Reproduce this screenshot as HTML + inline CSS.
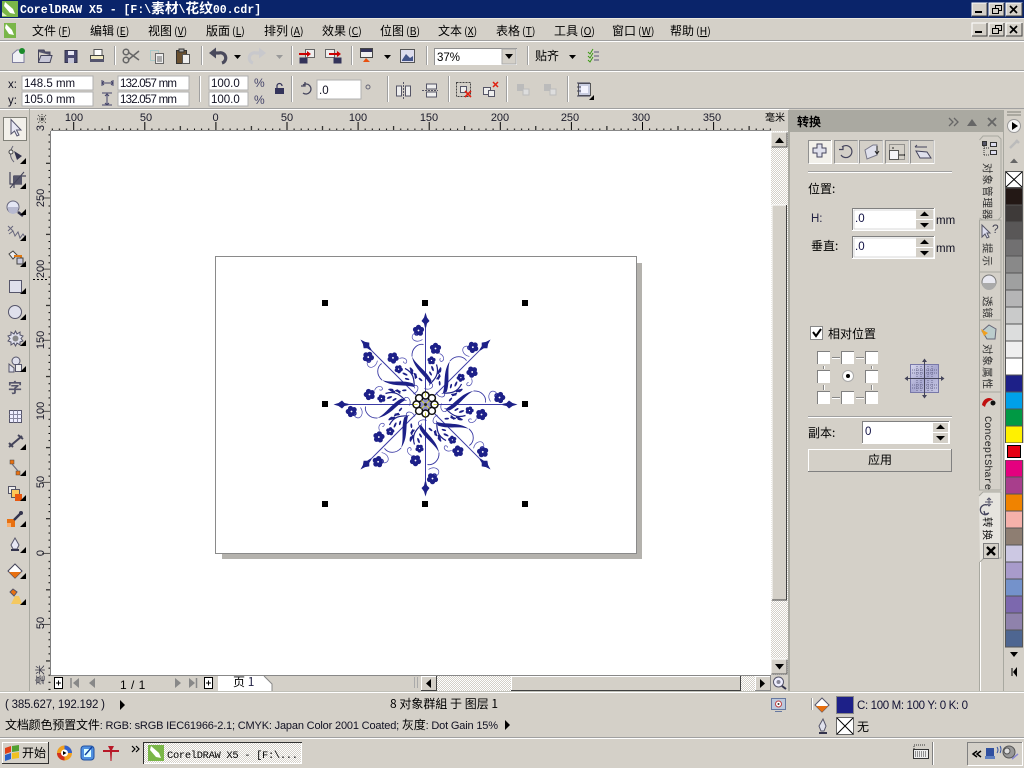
<!DOCTYPE html>
<html><head><meta charset="utf-8"><style>
html,body{margin:0;padding:0;background:#d4d0c8;overflow:hidden}
svg{display:block;position:absolute;left:0;top:0}
text{font-family:"Liberation Sans","Noto Sans CJK SC",sans-serif;font-size:12px;fill:#000}
.cj{font-family:"WenQuanYi Zen Hei","Noto Sans CJK SC",sans-serif}
.m{font-family:"Liberation Mono","WenQuanYi Zen Hei","Noto Sans CJK SC",monospace}
.r{font-size:11px;fill:#1a1a2a}
.n{font-size:11.5px;fill:#112}
</style></head><body>
<svg width="1024" height="768" viewBox="0 0 1024 768" xmlns="http://www.w3.org/2000/svg">
<defs>
<pattern id="dith" width="2" height="2" patternUnits="userSpaceOnUse"><rect width="2" height="2" fill="#d4d0c8"/><rect width="1" height="1" fill="#fff"/><rect x="1" y="1" width="1" height="1" fill="#fff"/></pattern>
<pattern id="hr" width="71.1" height="22" x="215.4" y="109" patternUnits="userSpaceOnUse"><path d="M.5 13V22M7.6 19.500V21M14.700 19.500V21M21.800 19.500V21M28.900 19.500V21M36 17V21M43.100 19.500V21M50.200 19.500V21M57.300 19.500V21M64.400 19.500V21" stroke="#000" stroke-width="1"/></pattern>
<pattern id="vr" width="22" height="71.1" x="30" y="-15" patternUnits="userSpaceOnUse"><path d="M12 71H21M18.500 7.700H20.500M18.500 14.800H20.500M18.500 21.900H20.500M18.500 29H20.500M16 36.100H20.500M18.500 43.200H20.500M18.500 50.300H20.500M18.500 57.400H20.500M18.500 64.500H20.500" stroke="#000" stroke-width="1"/></pattern>
<g id="fl"><circle cx="0" cy="-3.200" r="2.600"/><circle cx="3" cy="-1" r="2.600"/><circle cx="1.900" cy="2.600" r="2.600"/><circle cx="-1.900" cy="2.600" r="2.600"/><circle cx="-3" cy="-1" r="2.600"/><circle r=".9" fill="#fff"/></g>
<g id="arm" fill="#1d2088">
<path d="M0 -12V-80" stroke="#3a3aa4" stroke-width="1" fill="none"/>
<path d="M0 -92L1.500 -87L4 -83.500L1.500 -81L.6 -77H-.6L-1.500 -81L-4 -83.500L-1.500 -87Z"/>
<use href="#fl" x="-7" y="-74"/><use href="#fl" x="10" y="-56"/>
<use href="#fl" transform="translate(6 -44) scale(.72)"/>
<path d="M4.500 -20C-1 -30 -11 -35 -13.500 -48C-9 -39 1 -34 6 -24Z"/>
<path d="M-13.500 -48C-14 -56 -8 -61 -2 -60" stroke="#3a3aa4" stroke-width=".9" fill="none"/>
<path d="M-3 -65C-9 -61 -15 -65 -13 -69C-12 -72 -8 -71 -9 -69" stroke="#4a4ab0" stroke-width=".7" fill="none"/>
<path d="M5 -21C10 -26 14 -31 11 -40" stroke="#1d2088" stroke-width="1.200" fill="none"/>
<path d="M-1 -16C4 -14 8 -17 7 -20C6 -22 4 -21 4 -19" stroke="#3a3aa4" stroke-width=".7" fill="none"/>
<path d="M14 -51C19 -49 19 -44 16 -43C14 -43 14 -46 15 -46" stroke="#4a4ab0" stroke-width=".7" fill="none"/>
<ellipse cx="13.500" cy="-33" rx="1.100" ry="3" transform="rotate(20 13.500 -33)"/><ellipse cx="7" cy="-36" rx="1" ry="2.800" transform="rotate(-20 7 -36)"/><ellipse cx="13" cy="-27" rx="1" ry="2.800" transform="rotate(50 13 -27)"/><ellipse cx="5" cy="-31" rx=".9" ry="2.300" transform="rotate(-30 5 -31)"/>
<ellipse cx="-10" cy="-29" rx="1" ry="3" transform="rotate(-30 -10 -29)"/><ellipse cx="-14" cy="-35" rx="1" ry="2.600" transform="rotate(-40 -14 -35)"/><ellipse cx="-5" cy="-25" rx=".9" ry="2.300" transform="rotate(-50 -5 -25)"/>
</g>
<g id="sb"><rect width="16" height="15" fill="#d4d0c8"/><path d="M0 15V0H16" stroke="#fff" fill="none"/><path d="M.5 15H16V.5" stroke="#555" fill="none"/></g>
<linearGradient id="pv" x1="0" y1="0" x2="1" y2="1"><stop offset="0" stop-color="#d8d8ee"/><stop offset=".5" stop-color="#a8a8d0"/><stop offset="1" stop-color="#c8c8e4"/></linearGradient>
</defs>

<rect width="1024" height="768" fill="#d4d0c8"/>

<!-- title -->
<rect width="1024" height="18" fill="#0a246a"/>
<rect x="0" y="18" width="1024" height="1" fill="#ece9e0"/>
<rect x="2" y="1" width="16" height="16" fill="#7ab648"/><path d="M5 2L13 9L15 14L10 13L4 6Z" fill="#fff"/><path d="M2 12L7 16H2Z" fill="#dff0c0"/>
<text class="m" x="20" y="13" style="font-size:11.500px;font-weight:bold;fill:#fff">CorelDRAW X5 - [F:\<tspan class="cj" style="font-size:13.700px">素材</tspan>\<tspan class="cj" style="font-size:13.700px">花纹</tspan>00.cdr]</text>

<g id="wb">
<rect x="972" y="3" width="15" height="13" fill="#d4d0c8" stroke="#fff"/><path d="M987 3V16H972" stroke="#404040" fill="none"/><rect x="975" y="11" width="7" height="2" fill="#000"/>
<rect x="989" y="3" width="15" height="13" fill="#d4d0c8" stroke="#fff"/><path d="M1004 3V16H989" stroke="#404040" fill="none"/><path d="M995.500 8.500V5.500H1001.500V10.500H999M992.500 8.500H998.500V13.500H992.500Z" stroke="#000" fill="none"/><path d="M995 5.500H1002M992 8.500H999" stroke="#000"/>
<rect x="1006" y="3" width="16" height="13" fill="#d4d0c8" stroke="#fff"/><path d="M1022 3V16H1006" stroke="#404040" fill="none"/><path d="M1010 6L1017 13M1017 6L1010 13" stroke="#000" stroke-width="1.700"/>
</g>
<use href="#wb" y="20"/>

<!-- menu -->
<rect x="4" y="23" width="12" height="15" fill="#7ab648"/><path d="M6 24L12 30L14 35L9 34L5 28Z" fill="#fff"/>
<g class="cj">
<text x="32" y="35" class="cj">文件<tspan style="font-size:10.500px" dx="2">(<tspan text-decoration="underline">F</tspan>)</tspan></text>
<text x="90" y="35" class="cj">编辑<tspan style="font-size:10.500px" dx="2">(<tspan text-decoration="underline">E</tspan>)</tspan></text>
<text x="148" y="35" class="cj">视图<tspan style="font-size:10.500px" dx="2">(<tspan text-decoration="underline">V</tspan>)</tspan></text>
<text x="206" y="35" class="cj">版面<tspan style="font-size:10.500px" dx="2">(<tspan text-decoration="underline">L</tspan>)</tspan></text>
<text x="264" y="35" class="cj">排列<tspan style="font-size:10.500px" dx="2">(<tspan text-decoration="underline">A</tspan>)</tspan></text>
<text x="322" y="35" class="cj">效果<tspan style="font-size:10.500px" dx="2">(<tspan text-decoration="underline">C</tspan>)</tspan></text>
<text x="380" y="35" class="cj">位图<tspan style="font-size:10.500px" dx="2">(<tspan text-decoration="underline">B</tspan>)</tspan></text>
<text x="438" y="35" class="cj">文本<tspan style="font-size:10.500px" dx="2">(<tspan text-decoration="underline">X</tspan>)</tspan></text>
<text x="496" y="35" class="cj">表格<tspan style="font-size:10.500px" dx="2">(<tspan text-decoration="underline">T</tspan>)</tspan></text>
<text x="554" y="35" class="cj">工具<tspan style="font-size:10.500px" dx="2">(<tspan text-decoration="underline">O</tspan>)</tspan></text>
<text x="612" y="35" class="cj">窗口<tspan style="font-size:10.500px" dx="2">(<tspan text-decoration="underline">W</tspan>)</tspan></text>
<text x="670" y="35" class="cj">帮助<tspan style="font-size:10.500px" dx="2">(<tspan text-decoration="underline">H</tspan>)</tspan></text>
</g>
<rect y="40" width="1024" height="1" fill="#a0a0a0"/><rect y="41" width="1024" height="1" fill="#fff"/>

<!-- toolbar -->
<g>
<path d="M12.500 54L17 50H24V62.500H12.500Z" fill="#f0f0f4" stroke="#8080a0"/><circle cx="22" cy="51" r="3" fill="#1a8a2a"/>
<path d="M38.500 52V62.500H50L52 55.500H41L38.500 62" fill="#c8c8d8" stroke="#44445c"/><path d="M38.500 52V50H44L45 52H50V55" fill="#55556e" stroke="#44445c"/>
<path d="M65 50.500H77V62.500H65Z" fill="#4a4a70" stroke="#33334c"/><rect x="68" y="51" width="6" height="4" fill="#e8e8f4"/><rect x="68" y="58" width="6" height="5" fill="#c8c8d8"/>
<rect x="94" y="49.500" width="8" height="6" fill="#fff" stroke="#555"/><path d="M90.500 55.500H103.500V61.500H90.500Z" fill="#f0e8c0" stroke="#444"/><rect x="90" y="59" width="14" height="3" fill="#55556e"/>
<circle cx="126" cy="60" r="2.800" fill="none" stroke="#666" stroke-width="1.500"/><circle cx="126" cy="52" r="2.800" fill="none" stroke="#666" stroke-width="1.500"/><path d="M128 52L139 60M128 60L139 51" stroke="#666" stroke-width="1.500"/>
<rect x="150.500" y="50.500" width="8" height="10" fill="none" stroke="#a8c8c8"/><rect x="155.500" y="53.500" width="8" height="10" fill="#eee" stroke="#666"/><path d="M157 57H162M157 59H162M157 61H162" stroke="#666"/>
<rect x="176.500" y="50.500" width="10" height="13" fill="#6a5030" stroke="#333"/><rect x="179" y="49" width="5" height="3" fill="#aaa" stroke="#333"/><rect x="182.500" y="54.500" width="7" height="9" fill="#eee" stroke="#555"/>
<path d="M214 53H219A5 5 0 0 1 222 63" stroke="#4a4a5c" stroke-width="3.200" fill="none"/><path d="M216 47.500L209 53L216 58.500Z" fill="#4a4a5c"/>
<path d="M234 55H241L237.500 59Z" fill="#000"/>
<path d="M261 53H256A5 5 0 0 0 253 63" stroke="#c8c8cc" stroke-width="3.200" fill="none"/><path d="M259 47.500L266 53L259 58.500Z" fill="#c8c8cc"/>
<path d="M276 55H283L279.500 59Z" fill="#999"/>
<rect x="299.500" y="57.500" width="8" height="6" fill="#33335a"/><rect x="305.500" y="49.500" width="9" height="8" fill="#eee" stroke="#666"/><path d="M299 54H309" stroke="#c00" stroke-width="2"/><path d="M307 51L311 54L307 57Z" fill="#c00"/>
<rect x="325.500" y="49.500" width="9" height="8" fill="#eee" stroke="#666"/><rect x="333.500" y="57.500" width="8" height="6" fill="#33335a"/><path d="M329 54H339" stroke="#c00" stroke-width="2"/><path d="M337 51L341 54L337 57Z" fill="#c00"/>
<rect x="360.500" y="48.500" width="12" height="9" fill="#eee" stroke="#444"/><rect x="361" y="49" width="11" height="3" fill="#33335a"/><path d="M363 62L366 58L370 62Z" fill="#e85010"/>
<path d="M384 55H391L387.500 59Z" fill="#000"/>
<rect x="400.500" y="49.500" width="14" height="13" fill="#dde" stroke="#555"/><path d="M402 60L406 54L410 58L413 56V61H402Z" fill="#44558a"/>
<path d="M114.500 46V65M201.500 46V65M291.500 46V65M351.500 46V65M426.500 46V65M527.500 46V65" stroke="#a0a0a0"/><path d="M115.500 46V65M202.500 46V65M292.500 46V65M352.500 46V65M427.500 46V65M528.500 46V65" stroke="#fff"/>
<rect x="434" y="48" width="83" height="17" fill="#fff"/><path d="M434.500 65V48.500H517" stroke="#909090" fill="none"/>
<rect x="502" y="49" width="14" height="15" fill="#d4d0c8" stroke="#aaa"/><path d="M505 54H513L509 59Z" fill="#000"/>
<text x="437" y="61" style="font-size:11.500px">37%</text>
<text x="535" y="60" class="cj">贴齐</text>
<path d="M569 55H576L572.500 59Z" fill="#000"/>
<path d="M594 52H599M594 56H599M594 60H599" stroke="#5a5a78" fill="none"/><path d="M588 52L590 54L593 49M588 56L590 58L593 53M588 60L590 62L593 57" stroke="#3a9a10" fill="none"/>
</g>
<rect y="70" width="1024" height="1" fill="#a0a0a0"/><rect y="71" width="1024" height="1" fill="#fff"/>

<!-- property bar -->
<g>
<text x="8" y="88" class="n">x:</text><text x="8" y="104" class="n">y:</text>
<rect x="22" y="76" width="71" height="14" fill="#fff" stroke="#b0b0b0"/><rect x="22" y="92" width="71" height="14" fill="#fff" stroke="#b0b0b0"/>
<text x="24" y="87" class="n">148.5 mm</text><text x="24" y="103" class="n">105.0 mm</text>
<path d="M102 83H113M102 80V86M113 80V86M104 81L102 83L104 85M111 81L113 83L111 85" stroke="#44446a" fill="none"/>
<path d="M107 94V105M102 93H112M102 105H112M105 96L107 94L109 96M105 103L107 105L109 103" stroke="#44446a" fill="none"/>
<rect x="118" y="76" width="71" height="14" fill="#fff" stroke="#b0b0b0"/><rect x="118" y="92" width="71" height="14" fill="#fff" stroke="#b0b0b0"/>
<text x="120" y="87" class="n" textLength="57">132.057 mm</text><text x="120" y="103" class="n" textLength="57">132.057 mm</text>
<path d="M199.500 76V102" stroke="#a0a0a0"/><path d="M200.500 76V102" stroke="#fff"/>
<rect x="209" y="76" width="39" height="14" fill="#fff" stroke="#b0b0b0"/><rect x="209" y="92" width="39" height="14" fill="#fff" stroke="#b0b0b0"/>
<text x="211" y="87" class="n">100.0</text><text x="211" y="103" class="n">100.0</text>
<text x="254" y="87" style="font-size:12px;fill:#44446a">%</text><text x="254" y="104" style="font-size:12px;fill:#44446a">%</text>
<rect x="275" y="88" width="9" height="6" fill="#33335a"/><path d="M277 88V86A2.500 2.500 0 0 1 282 86" stroke="#33335a" fill="none" stroke-width="1.200"/>
<path d="M291.500 76V102" stroke="#a0a0a0"/><path d="M292.500 76V102" stroke="#fff"/>
<path d="M303 85A5 5 0 1 1 303 93M301 86H305V82" stroke="#44445c" fill="none" stroke-width="1.300"/>
<rect x="317" y="80" width="44" height="19" fill="#fff" stroke="#b0b0b0"/><text x="319" y="94" class="n">.0</text>
<circle cx="368" cy="87" r="2" fill="none" stroke="#667"/>
<path d="M387.500 76V102M448.500 76V102M506.500 76V102M567.500 76V102" stroke="#a0a0a0"/><path d="M388.500 76V102M449.500 76V102M507.500 76V102M568.500 76V102" stroke="#fff"/>
<path d="M396.500 86H401.500V96H396.500ZM405.500 86H410.500V96H405.500Z" fill="#eee" stroke="#556"/><path d="M403.500 82V99" stroke="#556" stroke-dasharray="2 1"/>
<path d="M426.500 84H436.500V89H426.500ZM426.500 92H436.500V97H426.500Z" fill="#eee" stroke="#556"/><path d="M422 90.500H438" stroke="#556" stroke-dasharray="2 1"/>
<rect x="456.500" y="82.500" width="14" height="14" fill="none" stroke="#444" stroke-dasharray="2 1"/><rect x="460.500" y="86.500" width="6" height="6" fill="#eee" stroke="#556"/><path d="M465 91L471 97M471 91L465 97" stroke="#e02010" stroke-width="1.600"/>
<rect x="483.500" y="87.500" width="7" height="7" fill="#eee" stroke="#556"/><rect x="488.500" y="90.500" width="6" height="6" fill="#eee" stroke="#556"/><path d="M493 82L498 87M498 82L493 87" stroke="#e02010" stroke-width="1.500"/>
<rect x="517" y="84" width="7" height="7" fill="#bbb"/><rect x="523" y="89" width="6" height="6" fill="#ddd" stroke="#bbb"/><rect x="544" y="84" width="7" height="7" fill="#bbb"/><rect x="550" y="89" width="6" height="6" fill="#ddd" stroke="#bbb"/>
<rect x="578.500" y="83.500" width="12" height="12" fill="#c8cce0" stroke="#555"/><rect x="581" y="86" width="7" height="7" fill="#f4f4ff"/><path d="M577 83H590M577 87H581M577 91H581M577 96H590" stroke="#44445c"/><path d="M589 100L594 95V100Z" fill="#000"/>
</g>
<rect y="108" width="1024" height="1" fill="#a0a0a0"/><rect y="109" width="789" height="1" fill="#fff"/>

<!-- toolbox -->
<rect x="29" y="109" width="1" height="583" fill="#a8a8a0"/>
<rect x="3.500" y="117.500" width="23" height="23" fill="#f2f0ea" stroke="#808078"/>
<g>
<path d="M11 119.500V134L14.500 131L17 136L19 135L16.500 130H21Z" fill="#e8e8f4" stroke="#55556e"/>
<path d="M13 146C9 152 10 158 14 162" stroke="#667" fill="none"/><circle cx="11" cy="152" r="2" fill="#eee" stroke="#444"/><path d="M14 151L22 156L17 160Z" fill="#33334c"/>
<path d="M10 172V184H22M14 188V176H26" stroke="#44445a" fill="none" stroke-width="1.200"/><rect x="13" y="176" width="9" height="8" fill="#55556a"/><path d="M10 188L24 172" stroke="#44445a"/>
<circle cx="13" cy="207" r="6" fill="#e4e6f4" stroke="#66667c"/><path d="M8 207H18V209A5 5 0 0 1 8 209Z" fill="#b8bad0"/><path d="M18 212L23 216" stroke="#33334c" stroke-width="2.500"/>
<path d="M8 226L13 231M13 226L8 231M9 234L13 231L15 236L18 232L20 238L23 234L25 237" stroke="#66667c" fill="none"/>
<path d="M9 254L13 251L17 255L13 259Z" fill="#eee" stroke="#444"/><path d="M14 256H21V262" stroke="#e07810" stroke-width="2" fill="none"/><rect x="17" y="258" width="6" height="6" fill="#ccd" stroke="#444"/>
<rect x="9.500" y="280.500" width="12" height="12" fill="#dfe0ec" stroke="#55556a"/>
<circle cx="15" cy="312" r="6.500" fill="#dfe0ec" stroke="#55556a"/>
<path d="M15.500 331L17 334L20 332L20 335L23 336L21 338.500L23 341L20 342L20 345L17 343L15.500 346L14 343L11 345L11 342L8 341L10 338.500L8 336L11 335L11 332L14 334Z" fill="#dfe0ec" stroke="#55556a"/><circle cx="15.500" cy="338.500" r="3" fill="#888"/>
<circle cx="16" cy="361" r="4" fill="#dfe0ec" stroke="#55556a"/><path d="M9 364L14 368V372H9Z" fill="#dfe0ec" stroke="#55556a"/><rect x="15.500" y="364.500" width="6" height="7" fill="#eee" stroke="#55556a"/>
<text x="8" y="393" class="cj" style="font-size:14px;fill:#55556a;font-weight:bold">字</text>
<rect x="9.500" y="410.500" width="12" height="12" fill="#eef" stroke="#55556a"/><path d="M9.500 414.500H21.500M9.500 418.500H21.500M13.500 410.500V422.500M17.500 410.500V422.500" stroke="#8888a0"/>
<path d="M9 447L22 436" stroke="#44445a" stroke-width="2"/><path d="M9 443L13 447M18 435L23 439" stroke="#44445a" stroke-width="2"/>
<rect x="10" y="460" width="4" height="4" fill="#e87010" stroke="#444" stroke-width=".5"/><rect x="16" y="471" width="4" height="4" fill="#e87010" stroke="#444" stroke-width=".5"/><path d="M12 464L18 471" stroke="#667"/>
<rect x="8.500" y="486.500" width="7" height="7" fill="#eee" stroke="#556"/><rect x="11.500" y="489.500" width="8" height="8" fill="#fcc858" stroke="#556"/><rect x="15" y="494" width="7" height="7" fill="#e85810"/>
<rect x="7" y="519" width="8" height="8" fill="#e87010"/><rect x="7" y="523" width="4" height="4" fill="#f8b070"/><path d="M14 520L22 512" stroke="#33334c" stroke-width="2.500"/><circle cx="21" cy="513" r="2" fill="#33334c"/>
<path d="M15 538L19 545L17 549H13L11 545Z" fill="#e8e8f4" stroke="#55556a"/><rect x="11" y="549" width="8" height="2" fill="#33334c"/>
<path d="M8 571L15 564L22 571L15 578Z" fill="#fff" stroke="#44445a"/><path d="M9 572H21L15 578Z" fill="#e87010"/>
<path d="M10 592L13 589L17 592L14 596Z" fill="#e87010" stroke="#55556a"/><path d="M15 596H19L22 604H11Z" fill="#f4c860"/>
<path d="M20 164H26V158Z M20 189H26V183Z M20 215H26V209Z M20 241H26V235Z M20 267H26V261Z M20 294H26V288Z M20 320H26V314Z M20 346H26V340Z M20 372H26V366Z M20 450H26V444Z M20 476H26V470Z M20 501H26V495Z M20 527H26V521Z M20 553H26V547Z M20 579H26V573Z M20 605H26V599Z" fill="#000"/>
</g>

<!-- rulers -->
<rect x="30" y="110" width="759" height="21" fill="#d4d0c8"/>
<rect x="51" y="109" width="720" height="22" fill="url(#hr)"/>
<rect x="30" y="131" width="21" height="560" fill="url(#vr)"/>
<path d="M38 115L46 123M46 115L38 123M42 114V124M37 119H47" stroke="#333" stroke-dasharray="1 1"/>
<g text-anchor="middle">
<text class="r" x="74" y="121">100</text><text class="r" x="146" y="121">50</text><text class="r" x="215.500" y="121">0</text><text class="r" x="287" y="121">50</text><text class="r" x="358" y="121">100</text><text class="r" x="429" y="121">150</text><text class="r" x="500" y="121">200</text><text class="r" x="570" y="121">250</text><text class="r" x="641" y="121">300</text><text class="r" x="712" y="121">350</text>
<text class="cj" x="775" y="121" style="font-size:10px">毫米</text>
<text class="r" transform="translate(44 128) rotate(-90)">3</text>
<text class="r" transform="translate(44 198) rotate(-90)">250</text>
<text class="r" transform="translate(44 269) rotate(-90)">200</text>
<text class="r" transform="translate(44 340) rotate(-90)">150</text>
<text class="r" transform="translate(44 411) rotate(-90)">100</text>
<text class="r" transform="translate(44 482) rotate(-90)">50</text>
<text class="r" transform="translate(44 553) rotate(-90)">0</text>
<text class="r" transform="translate(44 623) rotate(-90)">50</text>
<text class="cj" transform="translate(44 675) rotate(-90)" style="font-size:10px;fill:#334">毫米</text>
</g>
<path d="M33 279.500H48" stroke="#000" stroke-dasharray="2 2"/>
<path d="M50.500 131V676" stroke="#808080"/>

<!-- canvas -->
<rect x="51" y="131" width="720" height="544" fill="#fff"/>
<rect x="51" y="130" width="720" height="1" fill="#888"/>
<rect x="222" y="263" width="420" height="296" fill="#b4b2ad"/>
<rect x="215.500" y="256.500" width="421" height="297" fill="#fff" stroke="#8a8a8a"/>
<g transform="translate(425.500 404.500)">
<use href="#arm"/><use href="#arm" transform="rotate(45)"/><use href="#arm" transform="rotate(90)"/><use href="#arm" transform="rotate(135)"/><use href="#arm" transform="rotate(180)"/><use href="#arm" transform="rotate(225)"/><use href="#arm" transform="rotate(270)"/><use href="#arm" transform="rotate(315)"/>
<circle r="12.500" fill="#fff"/>
<circle r="5.500" fill="#9090cc"/>
<g fill="none" stroke="#111" stroke-width="1.500"><circle cx="0" cy="-9" r="3.500"/><circle cx="6.400" cy="-6.400" r="3.500"/><circle cx="9" cy="0" r="3.500"/><circle cx="6.400" cy="6.400" r="3.500"/><circle cx="0" cy="9" r="3.500"/><circle cx="-6.400" cy="6.400" r="3.500"/><circle cx="-9" cy="0" r="3.500"/><circle cx="-6.400" cy="-6.400" r="3.500"/></g>
<path d="M-4 -4L4 4M4 -4L-4 4M-12 0H-8M8 0H12M0 -12V-8M0 8V12" stroke="#d8d840"/><circle r="1.500" fill="#222"/>
</g>
<path d="M322 300h6v6h-6zM422 300h6v6h-6zM522 300h6v6h-6zM322 401h6v6h-6zM522 401h6v6h-6zM322 501h6v6h-6zM422 501h6v6h-6zM522 501h6v6h-6z" fill="#000"/>

<!-- v scrollbar -->
<rect x="771" y="131" width="17" height="545" fill="url(#dith)"/>
<use href="#sb" x="771" y="132"/><path d="M775 143H784L779.500 137.500Z" fill="#000"/>
<rect x="772" y="205" width="15" height="395" fill="#d4d0c8"/><path d="M772 600V205H787" stroke="#fff" fill="none"/><path d="M772 600H786.500V205" stroke="#404040" fill="none"/>
<use href="#sb" x="771" y="659"/><path d="M775 664H784L779.500 669.500Z" fill="#000"/>
<rect x="788" y="110" width="2" height="582" fill="#a8a8a0"/>

<!-- h nav -->
<rect x="51" y="675" width="737" height="1" fill="#888"/>
<rect x="51" y="676" width="737" height="15" fill="#d4d0c8"/>
<g stroke="#000" fill="none"><rect x="54.500" y="677.500" width="8" height="11" fill="#fff"/><path d="M56 683H61M58.500 680.500V685.500"/><rect x="204.500" y="677.500" width="8" height="11" fill="#fff"/><path d="M206 683H211M208.500 680.500V685.500"/></g>
<path d="M71 678V688" stroke="#888" stroke-width="1.500"/><path d="M79 678L73 683L79 688Z" fill="#888"/><path d="M95 678L89 683L95 688Z" fill="#888"/><path d="M175 678L181 683L175 688Z" fill="#888"/><path d="M189 678L195 683L189 688Z" fill="#888"/><path d="M196.500 678V688" stroke="#888" stroke-width="1.500"/>
<text x="120" y="689" style="font-size:12px;letter-spacing:.5px">1 / 1</text>
<path d="M218 676H264L272 684V691H218Z" fill="#fff"/><path d="M264 676L272 684V691" stroke="#888" fill="none"/>
<text x="233" y="686" class="cj">页 <tspan style="fill:#224">1</tspan></text>
<path d="M414.500 677V688M417.500 677V688" stroke="#aaa"/>
<rect x="437" y="676" width="334" height="15" fill="url(#dith)"/>
<rect x="421" y="676" width="16" height="15" fill="#d4d0c8"/><path d="M421.500 691V676.500H437" stroke="#fff" fill="none"/><path d="M421 690.500H436.500V676" stroke="#404040" fill="none"/><path d="M431 679V688L426 683.500Z" fill="#000"/>
<rect x="511" y="676" width="230" height="15" fill="#d4d0c8"/><path d="M511.500 691V676.500H741" stroke="#fff" fill="none"/><path d="M511 690.500H740.500V676" stroke="#404040" fill="none"/>
<rect x="755" y="676" width="16" height="15" fill="#d4d0c8"/><path d="M755.500 691V676.500H771" stroke="#fff" fill="none"/><path d="M755 690.500H770.500V676" stroke="#888" fill="none"/><path d="M760 679V688L765 683.500Z" fill="#000"/>
<rect x="771" y="675" width="17" height="16" fill="#d4d0c8"/><circle cx="778.500" cy="682" r="5" fill="#eef" stroke="#55556a"/><circle cx="778.500" cy="682" r="2" fill="#889"/><path d="M782 686L786 689" stroke="#33334c" stroke-width="2"/>

<!-- docker -->
<rect x="790" y="110" width="213" height="22" fill="#aaa9a1"/>
<text x="797" y="126" class="cj" style="font-size:12px;font-weight:bold">转换</text>
<path d="M949 118L953 122L949 126M954 118L958 122L954 126" stroke="#666" fill="none" stroke-width="1.300"/>
<path d="M967 126H977L972 119Z" fill="#666"/>
<path d="M988 118L996 126M996 118L988 126" stroke="#666" stroke-width="1.800"/>
<rect x="790" y="132" width="189" height="558" fill="#d4d0c8"/>
<rect x="808.500" y="140.500" width="23" height="23" fill="#f2f0ea" stroke="#fff"/><path d="M808.500 163.500V140.500H831" stroke="#909090" fill="none"/>
<g fill="#d4d0c8" stroke="#909090"><rect x="834.500" y="140.500" width="23" height="23"/><rect x="859.500" y="140.500" width="23" height="23"/><rect x="885.500" y="140.500" width="23" height="23"/><rect x="910.500" y="140.500" width="23" height="23"/></g>
<path d="M834.500 163.500H858V140.500M859.500 163.500H883V140.500M885.500 163.500H909V140.500M910.500 163.500H934V140.500" stroke="#fff" fill="none"/>
<path d="M817 144H822V148H826V153H822V157H817V153H813V148H817Z" fill="#dfe0ec" stroke="#44445c"/>
<path d="M842 147A6 6 0 1 1 841 155M839 149.500H843V146" stroke="#44445c" fill="none" stroke-width="1.200"/>
<path d="M865 150L873 145H877V155L867 159Z" fill="#dfe0ec" stroke="#778"/><path d="M877 146V153M875 151L877 154L879 151" stroke="#222" fill="none"/>
<rect x="889.500" y="150.500" width="9" height="9" fill="#f4f4f8" stroke="#555"/><rect x="889.500" y="144.500" width="15" height="15" fill="none" stroke="#555" stroke-dasharray="1 1"/><path d="M893 147V149M899 155H905" stroke="#222"/>
<path d="M916 151L927 152L931 158H920Z" fill="#dfe0ec" stroke="#44445c"/><path d="M915 147H927M915 147L917 145" stroke="#44445c" fill="none"/>
<rect x="808" y="171" width="144" height="1" fill="#a0a0a0"/><rect x="808" y="172" width="144" height="1" fill="#fff"/>
<text x="808" y="193" class="cj">位置:</text>
<text x="811" y="222" class="n" style="fill:#224">H:</text>
<text x="811" y="250" class="cj">垂直:</text>
<g id="inp1">
<rect x="852.500" y="208.500" width="82" height="22" fill="#fff" stroke="#fff"/><path d="M852.500 230V208.500H934" stroke="#808080" fill="none"/><path d="M854 210H933V229H854Z" fill="#fff" stroke="#b0b0b0" stroke-width=".5"/>
<rect x="916" y="209.500" width="17" height="20" fill="#d4d0c8"/><path d="M916 219.500H933" stroke="#fff"/>
<path d="M920 216H929L924.500 211.500Z M920 223H929L924.500 227.500Z" fill="#000"/>
<text x="855" y="222" class="n" style="fill:#114">.0</text>
</g>
<use href="#inp1" y="28"/>
<text x="936" y="224" class="n">mm</text><text x="936" y="252" class="n">mm</text>
<rect x="810.500" y="326.500" width="12" height="13" fill="#fff" stroke="#888"/><path d="M813 332L816 336L821 329" stroke="#000" stroke-width="2" fill="none"/>
<text x="828" y="338" class="cj">相对位置</text>
<g fill="#fff"><rect x="817" y="351" width="13" height="13"/><rect x="841" y="351" width="13" height="13"/><rect x="865" y="351" width="13" height="13"/><rect x="817" y="370" width="13" height="13"/><rect x="865" y="370" width="13" height="13"/><rect x="817" y="391" width="13" height="13"/><rect x="841" y="391" width="13" height="13"/><rect x="865" y="391" width="13" height="13"/></g>
<path d="M817.500 364V351.500H830M841.500 364V351.500H854M865.500 364V351.500H878M817.500 383V370.500H830M865.500 383V370.500H878M817.500 404V391.500H830M841.500 404V391.500H854M865.500 404V391.500H878" stroke="#808080" fill="none"/>
<path d="M832 357.500H840M856 357.500H864M832 397.500H840M856 397.500H864M823.500 366V369M871.500 366V369M823.500 385V390M871.500 385V390" stroke="#888"/><path d="M832 358.500H840M856 358.500H864M832 398.500H840M856 398.500H864M824.500 366V369M872.500 366V369M824.500 385V390M872.500 385V390" stroke="#fff"/>
<circle cx="848" cy="376" r="5.500" fill="#fff" stroke="#aaa"/><circle cx="848" cy="376" r="2" fill="#000"/>
<rect x="910.500" y="364.500" width="28" height="28" fill="url(#pv)" stroke="#7878a8"/><path d="M912 370H937M912 373H937M912 385H937M912 388H937M917 366V391M921 366V391M928 366V391M932 366V391" stroke="#55557a" stroke-dasharray="1 1" stroke-width=".8"/>
<path d="M924.500 360V397M906 378.500H943" stroke="#44445a"/><path d="M922 362H927L924.500 358.500ZM922 395H927L924.500 398.500ZM908 376V381L904.500 378.500ZM941 376V381L944.500 378.500Z" fill="#44445a"/>
<rect x="808" y="416" width="144" height="1" fill="#a0a0a0"/><rect x="808" y="417" width="144" height="1" fill="#fff"/>
<text x="808" y="437" class="cj">副本:</text>
<rect x="862.500" y="421.500" width="87" height="22" fill="#fff" stroke="#fff"/><path d="M862.500 443V421.500H949" stroke="#808080" fill="none"/>
<rect x="933" y="423" width="15" height="20" fill="#d4d0c8"/><path d="M933 432.500H948" stroke="#fff"/><path d="M936 429H945L940.500 424.500ZM936 436H945L940.500 440.500Z" fill="#000"/>
<text x="865" y="435" class="n" style="fill:#114">0</text>
<rect x="808" y="449" width="144" height="23" fill="#d4d0c8"/><path d="M808.500 472V449.500H952" stroke="#fff" fill="none"/><path d="M808 471.500H951.500V449" stroke="#808080" fill="none"/>
<text x="868" y="464" class="cj">应用</text>

<!-- tabs -->
<rect x="1003" y="110" width="1" height="582" fill="#a8a8a0"/>
<path d="M979.500 140L983 136H998L1001 139V217L998 220H983L979.500 218" fill="#d4d0c8" stroke="#a8a8a0"/>
<path d="M979.500 220H1001V272H979.500ZM979.500 272H1001V320H979.500ZM979.500 320H1001V392H979.500ZM979.500 392H1001V490H979.500Z" fill="#d4d0c8" stroke="#a8a8a0"/>
<path d="M979 496L983 492H1001V558H984L980 562" fill="#e6e4de" stroke="#a8a8a0"/>
<path d="M979.500 562V692" stroke="#a8a8a0"/>
<path d="M980.500 562V692" stroke="#fff"/>
<rect x="982.500" y="141.500" width="4" height="4" fill="#556" stroke="#333"/><rect x="990.500" y="142.500" width="6" height="4" fill="#dde" stroke="#333"/><rect x="990.500" y="150.500" width="6" height="4" fill="#dde" stroke="#333"/><path d="M984 146V156M984 148H990M984 155H990" stroke="#333" stroke-dasharray="1 1"/>
<path d="M982 225V237L985 234L987 238L989 237L987 233H990Z" fill="#dde" stroke="#556"/><text x="992" y="233" style="font-size:12px;fill:#445">?</text>
<circle cx="989" cy="282" r="7" fill="#e8e8f0" stroke="#777"/><path d="M982 283A7 7 0 0 0 996 283Z" fill="#aaa"/>
<path d="M982 331L989 325L996 329L995 339L987 339Z" fill="#bcc" stroke="#667"/><path d="M981 329L988 333L984 336Z" fill="#f0a020"/>
<path d="M982 405C983 398 990 396 993 400C990 400 986 402 985 407Z" fill="#c01010"/><circle cx="993" cy="403" r="2.500" fill="#111"/>
<path d="M989 498V506M985 502H993M987 500L989 498L991 500M987 504L989 506L991 504" stroke="#55556a" fill="none"/><path d="M987 505A5 5 0 1 0 988 514M984 511L985 514.500L989 513" stroke="#44445c" fill="none" stroke-width="1.300"/>
<text class="cj" transform="translate(984 163) rotate(90)" style="font-size:10.500px;letter-spacing:1px;fill:#333">对象管理器</text>
<text class="cj" transform="translate(984 243) rotate(90)" style="font-size:10.500px;letter-spacing:2px;fill:#333">提示</text>
<text class="cj" transform="translate(984 296) rotate(90)" style="font-size:10.500px;letter-spacing:1px;fill:#333">透镜</text>
<text class="cj" transform="translate(984 344) rotate(90)" style="font-size:10.500px;letter-spacing:1px;fill:#333">对象属性</text>
<text class="m" transform="translate(985 416) rotate(90)" textLength="74" style="font-size:10.500px;fill:#222">ConceptShare</text>
<text class="cj" transform="translate(984 517) rotate(90)" style="font-size:10.500px;letter-spacing:2px;fill:#111">转换</text>
<rect x="983.500" y="543.500" width="15" height="15" fill="#d4d0c8" stroke="#808080"/><path d="M987 547L995 555M995 547L987 555" stroke="#000" stroke-width="2.400"/>

<!-- palette -->
<rect x="1005" y="110" width="19" height="582" fill="#d4d0c8"/>
<path d="M1007 112H1021M1007 115H1021" stroke="#808078"/>
<circle cx="1014" cy="126" r="6.500" fill="#f4f4f4" stroke="#999"/><path d="M1012 122V130L1018 126Z" fill="#000"/>
<path d="M1010 148L1017 141M1016 140L1019 143" stroke="#bbb" stroke-width="2.500"/>
<path d="M1010 163H1018L1014 158.500Z" fill="#666"/>
<g stroke="#555" stroke-width="1">
<rect x="1005.500" y="171.500" width="17" height="16" fill="#fff"/>
<rect x="1005.500" y="188" width="17" height="17" fill="#231815"/><rect x="1005.500" y="205" width="17" height="17" fill="#3e3a39"/><rect x="1005.500" y="222" width="17" height="17" fill="#595757"/><rect x="1005.500" y="239" width="17" height="17" fill="#717071"/><rect x="1005.500" y="256" width="17" height="17" fill="#898989"/><rect x="1005.500" y="273" width="17" height="17" fill="#9fa0a0"/><rect x="1005.500" y="290" width="17" height="17" fill="#b5b5b6"/><rect x="1005.500" y="307" width="17" height="17" fill="#c9caca"/><rect x="1005.500" y="324" width="17" height="17" fill="#dcdddd"/><rect x="1005.500" y="341" width="17" height="17" fill="#efefef"/><rect x="1005.500" y="358" width="17" height="17" fill="#fff"/><rect x="1005.500" y="375" width="17" height="17" fill="#1d2088"/><rect x="1005.500" y="392" width="17" height="17" fill="#00a0e9"/><rect x="1005.500" y="409" width="17" height="17" fill="#009944"/><rect x="1005.500" y="426" width="17" height="17" fill="#fff100"/>
<rect x="1005.500" y="460" width="17" height="17" fill="#e4007f"/><rect x="1005.500" y="477" width="17" height="17" fill="#a83e8c"/><rect x="1005.500" y="494" width="17" height="17" fill="#f08300"/><rect x="1005.500" y="511" width="17" height="17" fill="#f5b1aa"/><rect x="1005.500" y="528" width="17" height="17" fill="#8e7e72"/><rect x="1005.500" y="545" width="17" height="17" fill="#ccc8e3"/><rect x="1005.500" y="562" width="17" height="17" fill="#a89bcb"/><rect x="1005.500" y="579" width="17" height="17" fill="#7492cb"/><rect x="1005.500" y="596" width="17" height="17" fill="#7c68ae"/><rect x="1005.500" y="613" width="17" height="17" fill="#8f82ac"/><rect x="1005.500" y="630" width="17" height="17" fill="#4e6691"/>
</g>
<path d="M1006 172L1022 187M1022 172L1006 187" stroke="#000"/>
<rect x="1005" y="443" width="19" height="17" fill="#fff"/><rect x="1007.500" y="445.500" width="13" height="12" fill="#e60012" stroke="#000"/>
<path d="M1010 652H1018L1014 657Z" fill="#000"/>
<path d="M1012 668V676" stroke="#000"/><path d="M1017 667V677L1013 672Z" fill="#000"/>

<!-- status -->
<rect y="692" width="1024" height="1" fill="#fff"/><rect y="691" width="1024" height="1" fill="#c0c0b8"/>
<text x="5" y="708" class="n" textLength="100" style="font-size:11.500px">( 385.627, 192.192 )</text>
<path d="M120 700V710L125 705Z" fill="#000"/>
<text x="390" y="708" class="cj" style="font-size:12px">8 对象群組 于 图层 1</text>
<text x="5" y="729" textLength="493" style="font-size:11px;fill:#112"><tspan class="cj" style="font-size:12px;fill:#000">文档颜色预置文件</tspan>: RGB: sRGB IEC61966-2.1; CMYK: Japan Color 2001 Coated; <tspan class="cj" style="font-size:12px;fill:#000">灰度</tspan>: Dot Gain 15%</text>
<path d="M505 720V730L510 725Z" fill="#000"/>
<rect x="771.500" y="698.500" width="14" height="11" fill="#bcc8dc" stroke="#6678a0"/><circle cx="778.500" cy="704" r="3" fill="#fff" stroke="#c04040"/><circle cx="778.500" cy="704" r="1" fill="#333"/><path d="M775 711.500H782" stroke="#6678a0"/>
<path d="M811.500 698V710" stroke="#999"/><path d="M812.500 698V710" stroke="#fff"/>
<path d="M815 705L822 698L829 705L822 712Z" fill="#fff" stroke="#55556a"/><path d="M816 706H828L822 712Z" fill="#e87010"/>
<rect x="836.500" y="696.500" width="17" height="17" fill="#1d2088" stroke="#888"/>
<text x="857" y="709" class="n" textLength="111" style="font-size:11.500px;fill:#113">C: 100 M: 100 Y: 0 K: 0</text>
<path d="M823 719L826 726L824 731H821L819 726Z" fill="#dfe0ec" stroke="#55556a"/><rect x="819" y="732" width="8" height="2" fill="#33334c"/>
<rect x="836.500" y="717.500" width="17" height="17" fill="#fff" stroke="#666"/><path d="M837 718L853 734M853 718L837 734" stroke="#000"/>
<text x="857" y="731" class="cj">无</text>

<!-- taskbar -->
<rect y="737" width="1024" height="1" fill="#a0a0a0"/><rect y="738" width="1024" height="1" fill="#fff"/>
<rect x="2" y="742" width="47" height="22" fill="#d4d0c8"/><path d="M2.500 764V742.500H49" stroke="#fff" fill="none"/><path d="M2 763.500H48.500V742" stroke="#303030" fill="none"/>
<path d="M5 748L11 746V752L5 754Z" fill="#e04018"/><path d="M12 746L19 745V751L12 752Z" fill="#50a030"/><path d="M5 755L11 753V759L5 761Z" fill="#2860c8"/><path d="M12 753L19 752V758L12 759Z" fill="#f0c020"/>
<text x="22" y="757" class="cj" style="font-size:12px">开始</text>
<circle cx="64.500" cy="753" r="7.500" fill="#f0a020"/><path d="M64.500 745.500A7.500 7.500 0 0 1 72 753H64.500Z" fill="#3060d0"/><path d="M57 753A7.500 7.500 0 0 0 64.500 760.500V753Z" fill="#d03020"/><circle cx="64.500" cy="753" r="3.500" fill="#fff"/><path d="M63 751V755L66.500 753Z" fill="#000"/>
<rect x="81" y="746" width="13" height="14" rx="3" fill="#5090e0" stroke="#2050a0"/><rect x="84" y="749" width="7" height="8" fill="#dff"/><path d="M85 755L92 747" stroke="#1040a0" stroke-width="1.500"/>
<path d="M103 750H119V752H112L111.500 761H110.500L110 752H103Z" fill="#b81828"/><path d="M108 746H114L112 750H110Z" fill="#b81828"/>
<path d="M132 746L135 749L132 752M136 746L139 749L136 752" stroke="#000" fill="none" stroke-width="1.200"/>
<rect x="143" y="742" width="159" height="22" fill="url(#dith)"/><path d="M143.500 764V742.500H302" stroke="#303030" fill="none"/><path d="M144 763.500H301.500V743" stroke="#fff" fill="none"/>
<rect x="148" y="745" width="16" height="16" fill="#7ab648"/><path d="M151 746L159 753L161 758L156 757L150 750Z" fill="#fff"/>
<text class="m" x="167" y="758" textLength="131" style="font-size:10.400px">CorelDRAW X5 - [F:\...</text>
<rect x="913.500" y="749.500" width="15" height="9" fill="#eee" stroke="#333"/><path d="M915 752H927M915 754H927M915 756H927" stroke="#333" stroke-dasharray="1 1"/><path d="M914 749V745H925" stroke="#333" stroke-dasharray="1 1" fill="none"/>
<path d="M932.500 742V765" stroke="#808080"/><path d="M933.500 742V765" stroke="#fff"/>
<path d="M967.500 765V742.500H1022" stroke="#808080" fill="none"/><path d="M968 765.500H1022.500V742" stroke="#fff" fill="none"/>
<path d="M977 751L973 754L977 757M981 751L977 754L981 757" stroke="#000" fill="none" stroke-width="1.500"/>
<rect x="986" y="748" width="8" height="8" fill="#3050a0"/><rect x="985" y="756" width="10" height="3" fill="#6080c0"/><path d="M997 747Q999 750 997 753M1000 746Q1002 749 1000 753" stroke="#3050a0" fill="none"/>
<circle cx="1009" cy="752" r="6" fill="#999" stroke="#555"/><circle cx="1007" cy="751" r="3" fill="#ddd" stroke="#555"/><path d="M1012 759L1018 754" stroke="#8888d0" stroke-width="1.500"/>
</svg>
</body></html>
